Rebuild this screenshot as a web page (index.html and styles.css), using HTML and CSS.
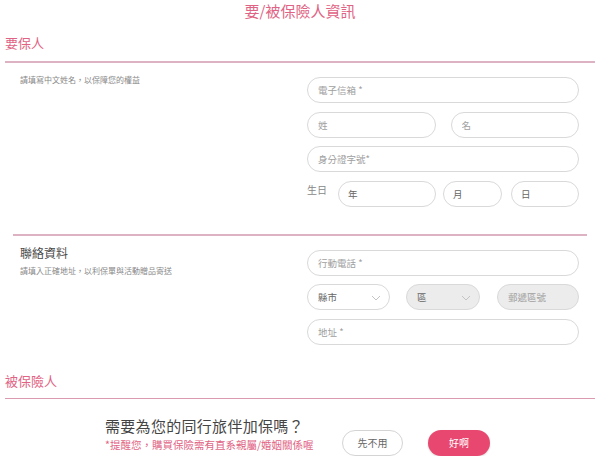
FILE: index.html
```html
<!DOCTYPE html>
<html lang="zh-Hant">
<head>
    <meta charset="UTF-8">
    <meta name="viewport" content="width=device-width, initial-scale=1.0">
    <title>要/被保險人資訊</title>
    <link rel="stylesheet" href="styles.css">
</head>
<body>
    <h1 class="page-title">要/被保險人資訊</h1>

    <h2 class="section-head">要保人</h2>

    <div class="block">
        <div class="block-info">
            <p class="hint hint-top">請填寫中文姓名，以保障您的權益</p>
        </div>
        <div class="block-fields">
            <input type="text" class="field" placeholder="電子信箱 *">
            <div class="row row-name">
                <input type="text" class="field" placeholder="姓">
                <input type="text" class="field" placeholder="名">
            </div>
            <input type="text" class="field" placeholder="身分證字號*">
            <div class="row row-birth">
                <span class="birth-label">生日</span>
                <div class="field field-value birth-year">年</div>
                <div class="field field-value birth-month">月</div>
                <div class="field field-value birth-day">日</div>
            </div>
        </div>
    </div>

    <div class="divider"></div>

    <div class="block">
        <div class="block-info">
            <h3 class="block-title">聯絡資料</h3>
            <p class="hint">請填入正確地址，以利保單與活動贈品寄送</p>
        </div>
        <div class="block-fields">
            <input type="text" class="field" placeholder="行動電話 *">
            <div class="row row-address">
                <div class="field field-value field-select">
                    縣市
                    <svg class="chevron" width="10" height="6" viewBox="0 0 10 6"><path d="M1 1l4 4 4-4" fill="none" stroke="#c4c4c4" stroke-width="1"/></svg>
                </div>
                <div class="field field-value field-select is-disabled">
                    區
                    <svg class="chevron" width="10" height="6" viewBox="0 0 10 6"><path d="M1 1l4 4 4-4" fill="none" stroke="#c4c4c4" stroke-width="1"/></svg>
                </div>
                <input type="text" class="field is-disabled" placeholder="郵遞區號" disabled>
            </div>
            <input type="text" class="field" placeholder="地址 *">
        </div>
    </div>

    <h2 class="section-head section-head-thin">被保險人</h2>

    <div class="prompt">
        <div class="prompt-text">
            <p class="prompt-question">需要為您的同行旅伴加保嗎？</p>
            <p class="prompt-note">*提醒您，購買保險需有直系親屬/婚姻關係喔</p>
        </div>
        <button class="btn btn-skip">先不用</button>
        <button class="btn btn-ok">好啊</button>
    </div>
</body>
</html>
```

FILE: styles.css
```css
body {
    margin: 0;
    background-color: #fff;
    font-family: "Noto Sans CJK TC", "Noto Sans", sans-serif;
    color: #333;
}

p, h1, h2, h3 {
    margin: 0;
    font-weight: normal;
}

.page-title {
    padding-top: 1px;
    font-size: 15px;
    line-height: 20px;
    text-align: center;
    color: #df6384;
}

.section-head {
    margin: 13px 5px 0;
    padding-bottom: 9px;
    font-size: 13px;
    line-height: 18px;
    color: #df6384;
    border-bottom: 2px solid #ddb2c2;
}

.section-head-thin {
    margin-top: 27px;
    padding-bottom: 8px;
    border-bottom: 1px solid #dc9aaf;
}

.block {
    display: flex;
    padding: 14px 0 0 20px;
}

.block-info {
    width: 287px;
}

.block-fields {
    width: 272px;
}

.block-title {
    margin-top: -5px;
    font-size: 12px;
    line-height: 16px;
    color: #4a4a4a;
}

.hint {
    margin-top: 4px;
    font-size: 8px;
    line-height: 12px;
    color: #888;
}

.hint-top {
    margin-top: -3px;
}

.divider {
    margin: 27px 13px 0;
    height: 2px;
    background-color: #ddb2c2;
}

.field {
    display: block;
    box-sizing: border-box;
    width: 100%;
    height: 26px;
    margin: 0 0 8.5px;
    padding: 0 10px;
    border: 1px solid #d9d9d9;
    border-radius: 13px;
    background-color: #fff;
    font-family: inherit;
    font-size: 9.5px;
    color: #666;
    outline: none;
}

.field::placeholder {
    color: #a0a0a0;
}

.block-fields > :last-child,
.block-fields > .row:last-child .field {
    margin-bottom: 0;
}

.field-value {
    display: flex;
    align-items: center;
}

.row {
    display: flex;
}

.row .field {
    margin-bottom: 8.5px;
}

.row-name {
    gap: 15px;
}

.birth-label {
    width: 31px;
    margin-top: 2px;
    font-size: 10px;
    line-height: 14px;
    color: #888;
}

.birth-year {
    width: 98px;
    padding-left: 9px;
}

.birth-month {
    width: 59px;
    margin-left: 7px;
    padding-left: 9px;
}

.birth-day {
    width: 68px;
    margin-left: 9px;
    padding-left: 9px;
}

.row-address .field:nth-child(1) {
    width: 83px;
}

.row-address .field:nth-child(2) {
    width: 74px;
    margin-left: 16px;
}

.row-address .field:nth-child(3) {
    width: 82px;
    margin-left: 17px;
}

.field-select {
    position: relative;
}

.chevron {
    position: absolute;
    right: 8px;
    top: 10px;
}

.is-disabled {
    background-color: #ececec;
}

.prompt {
    display: flex;
    align-items: flex-start;
    margin-top: 17px;
    padding-left: 105px;
}

.prompt-text {
    width: 237px;
}

.prompt-question {
    font-size: 15px;
    line-height: 20px;
    letter-spacing: 0.3px;
    color: #444;
}

.prompt-note {
    margin-top: 2px;
    font-size: 10.5px;
    line-height: 14px;
    color: #df6384;
}

.btn {
    height: 26px;
    margin-top: 14px;
    border-radius: 13px;
    font-family: inherit;
    font-size: 10px;
    cursor: pointer;
}

.btn-skip {
    width: 61px;
    border: 1px solid #d4d4d4;
    background-color: #fff;
    color: #666;
}

.btn-ok {
    width: 62px;
    margin-left: 25px;
    border: none;
    background-color: #e8476f;
    color: #fff;
    box-shadow: 0 1px 2px rgba(0, 0, 0, 0.15);
}
```
